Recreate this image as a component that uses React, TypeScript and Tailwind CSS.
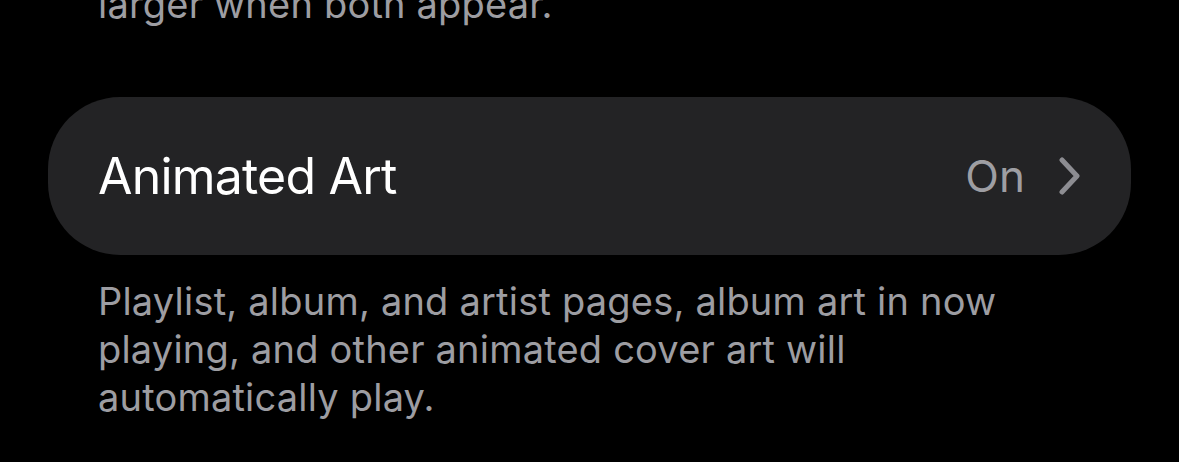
export default function App() {
    return (
        <div className="w-[1179px] h-[462px] overflow-hidden bg-black font-['Inter',sans-serif]">
            <p className="mt-[-20px] pl-[98px] text-[38px] leading-[48px] tracking-[0.2px] text-[#9d9da2]">
                larger when both appear.
            </p>
            <div className="mx-[48px] mt-[69px] h-[158px] rounded-[72px] bg-[#232325] flex items-center justify-between pl-[50px] pr-[50px]">
                <span className="text-[50px] text-white tracking-[-0.8px]">Animated Art</span>
                <div className="flex items-center gap-[34px]">
                    <span className="text-[44px] text-[#9e9ea3]">On</span>
                    <svg width="22" height="38" viewBox="0 0 22 38" fill="none">
                        <path d="M3 3 L18 19 L3 35" stroke="#8d8d92" strokeWidth="5" strokeLinecap="round" strokeLinejoin="round" />
                    </svg>
                </div>
            </div>
            <p className="mt-[22px] pl-[98px] pr-[150px] text-[38px] leading-[48px] tracking-[0.2px] text-[#9d9da2]">
                Playlist, album, and artist pages, album art in now playing, and other animated cover art will automatically play.
            </p>
        </div>
    );
}
